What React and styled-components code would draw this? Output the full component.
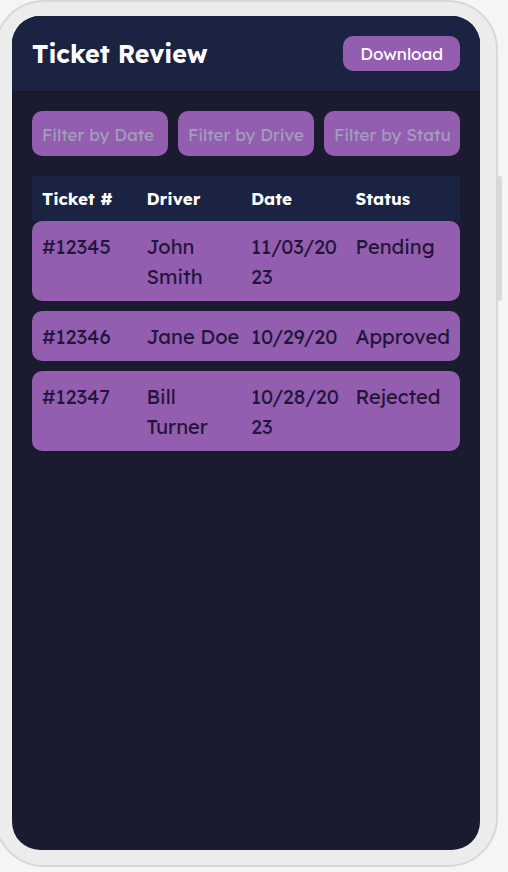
import React, { useState } from "react";
import styled, { createGlobalStyle } from "styled-components";

const GlobalStyle = createGlobalStyle`
  *, *::before, *::after { box-sizing: border-box; }
  html, body { margin: 0; }
  body {
    background: #f5f5f5;
    font-family: Lexend, Inter, sans-serif;
    overflow-x: hidden;
  }
  button, input { font-family: inherit; }
`;

const Device = styled.div`
  position: relative;
  display: flex;
  min-height: calc(100vh - 5px);
  margin: 0 10px 5px -6px;
  padding: 14px 16px 15px;
  border: 2px solid #d8d8d8;
  border-radius: 50px;
  background: #ececec;
`;

const SideButton = styled.span`
  position: absolute;
  top: 174px;
  right: -6px;
  width: 4px;
  height: 125px;
  border-radius: 0 3px 3px 0;
  background: #dadada;
`;

const Screen = styled.main`
  display: flex;
  flex: 1;
  flex-direction: column;
  min-width: 0;
  overflow: hidden;
  border-radius: 28px;
  background: #1b1b2f;
`;

const Header = styled.header`
  display: flex;
  align-items: center;
  justify-content: space-between;
  padding: 20px;
  background: #1a2342;
  box-shadow: 0 2px 5px rgba(26, 20, 30, 0.6);
`;

const Title = styled.h1`
  margin: 0;
  color: #fff;
  font-size: 25px;
  line-height: 35px;
  font-weight: 700;
`;

const DownloadButton = styled.button`
  height: 35px;
  padding: 0 17px;
  border: 0;
  border-radius: 10px;
  background: #935db0;
  color: #fff;
  font-size: 17px;
  cursor: pointer;
`;

const Content = styled.section`
  display: flex;
  flex-direction: column;
  gap: 20px;
  padding: 20px;
`;

const Filters = styled.form`
  display: grid;
  grid-template-columns: repeat(3, minmax(0, 1fr));
  gap: 10px;
`;

const FilterInput = styled.input`
  width: 100%;
  height: 45px;
  padding: 2px 10px 0;
  border: 0;
  border-radius: 10px;
  background: #935db0;
  color: #1b1b2f;
  font-size: 17px;

  &::placeholder { color: #a29fbb; opacity: 1; }
`;

const Table = styled.table`
  display: block;
`;

const TableHead = styled.thead`
  display: block;
`;

const TableBody = styled.tbody`
  display: flex;
  flex-direction: column;
  gap: 10px;
`;

const Row = styled.tr`
  display: grid;
  grid-template-columns: repeat(4, minmax(0, 1fr));
  gap: 10px;
  padding: ${({ $heading }) => ($heading ? "10px" : "11px 10px 9px")};
  border-radius: ${({ $heading }) => ($heading ? "0" : "10px")};
  background: ${({ $heading }) => ($heading ? "#1a2342" : "#935db0")};
`;

const HeadCell = styled.th`
  padding: 0;
  color: #fff;
  font-size: 17px;
  line-height: 25px;
  font-weight: 700;
  text-align: left;
`;

const Cell = styled.td`
  padding: 0;
  color: #21163a;
  font-size: 20px;
  line-height: 30px;
  overflow-wrap: anywhere;
`;

const filters = ["Date", "Driver", "Status"];
const columns = ["Ticket #", "Driver", "Date", "Status"];
const tickets = [
  { id: "#12345", driver: "John Smith", date: "11/03/2023", status: "Pending" },
  { id: "#12346", driver: "Jane Doe", date: "10/29/20", status: "Approved" },
  { id: "#12347", driver: "Bill Turner", date: "10/28/2023", status: "Rejected" },
];

export default function App() {
  const [values, setValues] = useState({ Date: "", Driver: "", Status: "" });
  const visible = tickets.filter(
    (t) =>
      t.date.includes(values.Date) &&
      t.driver.toLowerCase().includes(values.Driver.toLowerCase()) &&
      t.status.toLowerCase().includes(values.Status.toLowerCase())
  );

  return (
    <>
      <GlobalStyle />
      <Device>
        <SideButton />
        <Screen>
          <Header>
            <Title>Ticket Review</Title>
            <DownloadButton type="button">Download</DownloadButton>
          </Header>
          <Content>
            <Filters onSubmit={(e) => e.preventDefault()}>
              {filters.map((name) => (
                <FilterInput
                  key={name}
                  type="text"
                  aria-label={`Filter by ${name}`}
                  placeholder={`Filter by ${name}`}
                  value={values[name]}
                  onChange={(e) => setValues({ ...values, [name]: e.target.value })}
                />
              ))}
            </Filters>
            <Table>
              <TableHead>
                <Row $heading>
                  {columns.map((name) => (
                    <HeadCell key={name} scope="col">{name}</HeadCell>
                  ))}
                </Row>
              </TableHead>
              <TableBody>
                {visible.map((t) => (
                  <Row key={t.id}>
                    <Cell>{t.id}</Cell>
                    <Cell>{t.driver}</Cell>
                    <Cell>
                      {t.date.slice(0, 8)}
                      <wbr />
                      {t.date.slice(8)}
                    </Cell>
                    <Cell>{t.status}</Cell>
                  </Row>
                ))}
              </TableBody>
            </Table>
          </Content>
        </Screen>
      </Device>
    </>
  );
}
